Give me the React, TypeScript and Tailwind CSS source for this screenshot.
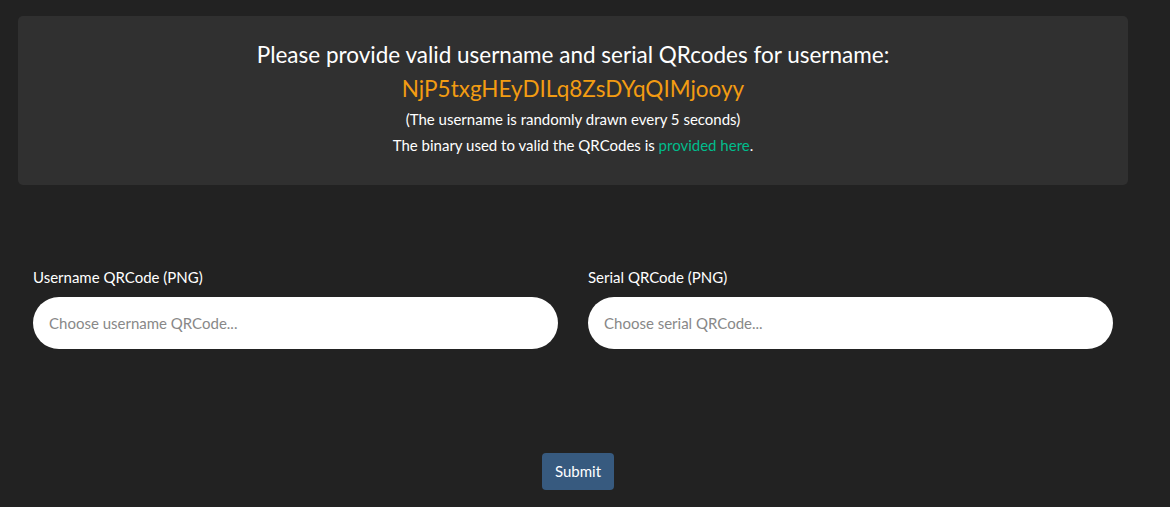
import React from 'react'

function FileField({ label, placeholder }: { label: string; placeholder: string }) {
  return (
    <div className="flex flex-col">
      <label className="text-[15px] leading-[20px] text-white mb-[10px]">{label}</label>
      <div className="h-[52px] rounded-full bg-white flex items-center pl-[16px] text-[15px] text-[#888]">
        {placeholder}
      </div>
    </div>
  )
}

export default function App() {
  return (
    <div className="min-h-[507px] bg-[#222222] pt-[16px] text-white" style={{ fontFamily: 'Lato, "Open Sans", sans-serif' }}>
      {/* banner */}
      <div className="ml-[18px] w-[1110px] bg-[#303030] rounded-[5px] pt-[26px] pb-[29px] text-center">
        <h4 className="text-[22.5px] leading-[26px]">Please provide valid username and serial QRcodes for username:</h4>
        <div className="mt-[6px] text-[22.5px] leading-[30px] text-[#f39c12]">NjP5txgHEyDILq8ZsDYqQIMjooyy</div>
        <p className="mt-[4px] text-[15px] leading-[22px]">(The username is randomly drawn every 5 seconds)</p>
        <p className="mt-[4px] text-[15px] leading-[22px]">
          The binary used to valid the QRCodes is <a className="text-[#00bc8c]">provided here</a>.
        </p>
      </div>

      {/* form */}
      <div className="ml-[33px] w-[1080px] mt-[82px] grid grid-cols-2 gap-[30px]">
        <FileField label="Username QRCode (PNG)" placeholder="Choose username QRCode..." />
        <FileField label="Serial QRCode (PNG)" placeholder="Choose serial QRCode..." />
      </div>

      <button className="ml-[542px] mt-[104px] w-[72px] h-[37px] rounded-[4px] bg-[#375a7f] text-[15px] text-white">
        Submit
      </button>
    </div>
  )
}
